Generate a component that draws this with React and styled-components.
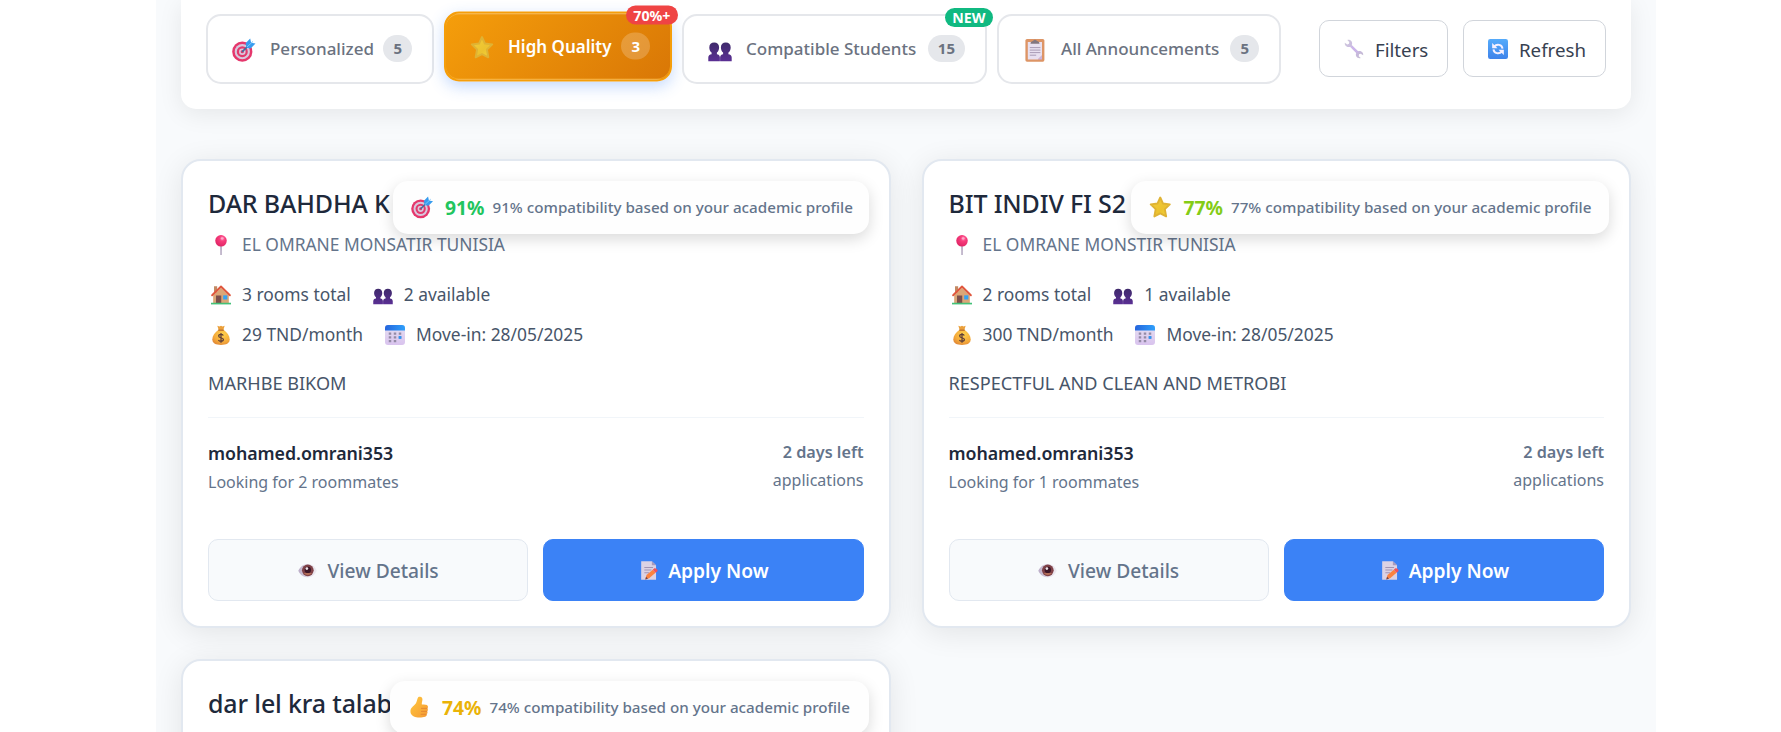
import React from 'react';
import styled, { createGlobalStyle, css } from 'styled-components';

const GlobalStyle = createGlobalStyle`
  *, *::before, *::after { box-sizing: border-box; }
  body {
    margin: 0;
    height: 732px;
    overflow: hidden;
    background: #fff;
    font-family: "Noto Sans", "Open Sans", sans-serif;
    color: #1e293b;
  }
  button { font-family: inherit; cursor: pointer; }
`;

/* ---------- icons ---------- */

const Svg = styled.svg`
  display: block;
  flex: none;
  width: ${(p) => p.$size}px;
  height: ${(p) => p.$size}px;
  overflow: visible;
`;

const DefsSvg = styled.svg`
  display: block;
  width: 0;
  height: 0;
`;

const Gradients = () => (
  <DefsSvg aria-hidden="true">
    <defs>
      <linearGradient id="starFill" x1="0" y1="0" x2="1" y2="1">
        <stop offset="0" stopColor="#f3cf3d" />
        <stop offset="0.6" stopColor="#ecc22f" />
        <stop offset="1" stopColor="#f5d93b" />
      </linearGradient>
      <linearGradient id="bustFill" x1="0" y1="0" x2="0" y2="1">
        <stop offset="0" stopColor="#3f2a6b" />
        <stop offset="1" stopColor="#5a2f94" />
      </linearGradient>
      <linearGradient id="blueFill" x1="0" y1="0" x2="0" y2="1">
        <stop offset="0" stopColor="#55abfb" />
        <stop offset="1" stopColor="#3f83ea" />
      </linearGradient>
      <linearGradient id="wrenchFill" x1="0" y1="0" x2="1" y2="1">
        <stop offset="0" stopColor="#cfcbd8" />
        <stop offset="0.5" stopColor="#c9b5e6" />
        <stop offset="1" stopColor="#c4bdcf" />
      </linearGradient>
      <radialGradient id="pinFill" cx="0.62" cy="0.3" r="0.75">
        <stop offset="0" stopColor="#ff7fae" />
        <stop offset="0.35" stopColor="#f73c7b" />
        <stop offset="1" stopColor="#dd2263" />
      </radialGradient>
      <radialGradient id="bagFill" cx="0.6" cy="0.3" r="0.85">
        <stop offset="0" stopColor="#ffd24d" />
        <stop offset="0.6" stopColor="#f4a93a" />
        <stop offset="1" stopColor="#d97b35" />
      </radialGradient>
      <linearGradient id="calendarTop" x1="0" y1="0" x2="1" y2="0">
        <stop offset="0" stopColor="#2664dc" />
        <stop offset="1" stopColor="#2ea0fb" />
      </linearGradient>
      <linearGradient id="calendarBody" x1="0" y1="0" x2="0" y2="1">
        <stop offset="0" stopColor="#e6e0f1" />
        <stop offset="1" stopColor="#d9c3ee" />
      </linearGradient>
      <linearGradient id="eyeWhite" x1="0" y1="0" x2="1" y2="0">
        <stop offset="0" stopColor="#b9aac6" />
        <stop offset="0.6" stopColor="#e5dfe9" />
        <stop offset="1" stopColor="#eeeaf0" />
      </linearGradient>
      <linearGradient id="thumbFill" x1="0" y1="0" x2="1" y2="1">
        <stop offset="0" stopColor="#ffc83d" />
        <stop offset="1" stopColor="#f59a35" />
      </linearGradient>
    </defs>
  </DefsSvg>
);

const icons = {
  target: (
    <>
      <circle cx="10.3" cy="13.7" r="10.1" fill="#e5376c" />
      <circle cx="10.3" cy="13.7" r="7.6" fill="#d8c8dd" />
      <circle cx="10.3" cy="13.7" r="5.5" fill="#e23a6d" />
      <circle cx="10.3" cy="13.7" r="3.3" fill="#d8c8dd" />
      <circle cx="10.3" cy="13.7" r="1.6" fill="#e23a6d" />
      <path d="M10.6 13.4 16 8" stroke="#3f6f9f" strokeWidth="1.6" strokeLinecap="round" />
      <path d="M13.6 5.3 18.2.5l.9 4.2 4.4.9-4.9 4.9-4-.8z" fill="#379cee" />
      <path d="M15 9 21 3.4" stroke="#7cc5fa" strokeWidth="1" />
    </>
  ),
  star: (
    <path
      d="M12 1.6 14.9 8l7.3.9-5.3 5.1 1.4 7.8L12 18.600l-6.300 3.200L7.100 14 1.800 8.900 9.100 8z"
      fill="url(#starFill)"
      stroke="#dfb334"
      strokeWidth="2"
      strokeLinejoin="round"
    />
  ),
  people: (
    <g fill="url(#bustFill)">
      <path d="M6.2 4.6c2.900 0 4.900 1.900 4.900 4.900 0 2.200-.9 4.100-2.200 5.100v1.700c1.800.3 3 1.400 3 3.200v3.700H.3v-3.700c0-1.800 1.300-2.900 3.300-3.200v-1.700c-1.400-1-2.300-2.900-2.300-5.100 0-3 2-4.900 4.900-4.900z" />
      <path d="M17.800 4.600c2.900 0 4.900 1.900 4.900 4.900 0 2.200-.9 4.100-2.300 5.100v1.700c2 .3 3.300 1.400 3.300 3.200v3.700H12.100v-3.700c0-1.800 1.200-2.900 3-3.200v-1.700c-1.300-1-2.200-2.900-2.200-5.100 0-3 2-4.900 4.900-4.900z" />
    </g>
  ),
  clipboard: (
    <>
      <rect x="2.4" y="1" width="19" height="22.700" rx="1.600" fill="#dd9566" />
      <path d="M4.800 4h14.200v13.500L14.800 21.500H4.800z" fill="#e8e0f0" />
      <path d="M19 17.300v4.200h-4.300z" fill="#c9b3df" />
      <path d="M7.500 5.800c0-2 1.400-2.700 2.600-2.800a2.100 2.100 0 0 1 3.800 0c1.200.1 2.600.8 2.600 2.800z" fill="#83777f" />
      <path d="M6.800 9.600h10.600M6.800 12.100h10.600M6.800 14.600h10.600M6.800 17.200h6.400" stroke="#a99cb5" strokeWidth="1" />
    </>
  ),
  wrench: (
    <>
      <path d="M6.500 6.500 18 18" stroke="url(#wrenchFill)" strokeWidth="3" />
      <path
        d="M1 4.600 4 6.500 6 5.800 6.300 3.500 4 1.200C7.400.1 10.600 3 9.600 6.700L7 9.500C3.700 10.400.4 8 1 4.600zM23 19.600l-3-1.900-2 .7-.3 2.300 2.400 2.200c-3.400 1.100-6.700-1.700-5.700-5.400l2.600-2.800c3.300-.9 6.600 1.500 6 4.900z"
        fill="url(#wrenchFill)"
      />
      <path d="M9 8.700 16.200 16" stroke="#cdb2f0" strokeWidth="1.400" />
    </>
  ),
  refresh: (
    <>
      <rect x="0" y="0" width="24" height="24" rx="2.600" fill="url(#blueFill)" />
      <g fill="none" stroke="#f5f0ff" strokeWidth="2.300">
        <path d="M7.300 9.200C10.500 5.400 17 6.500 17.400 11.600" />
        <path d="M16.700 15C13.500 18.700 7 17.500 6.600 12.500" />
      </g>
      <path d="M5 4.800v6.400h6.400zM19 19.200v-6.400h-6.400z" fill="#f5f0ff" />
    </>
  ),
  pin: (
    <>
      <path d="M11.100 12h1.900l-.1 12h-1.700z" fill="#b0a3bd" />
      <circle cx="12" cy="7" r="6.900" fill="url(#pinFill)" />
      <ellipse cx="13.400" cy="4.200" rx="1.800" ry="1.400" fill="#ffa9c9" />
    </>
  ),
  house: (
    <>
      <path d="M3.600 1.500h3.800v8H3.600z" fill="#c28a63" />
      <path d="M2.600 12.400 12 3.300l9.400 9.100v9.400H2.600z" fill="#dba677" />
      <path d="M6 12.600h6.300v9.200H6z" fill="#7c4f4b" />
      <path d="M14.600 12.400h5v5h-5z" fill="#35a2f2" />
      <path d="M1.300 12.300 12 1.800l10.700 10.500" fill="none" stroke="#e0563d" strokeWidth="2.200" strokeLinejoin="round" strokeLinecap="round" />
      <path d="M0 21.300h24v2H0z" fill="#43c178" />
    </>
  ),
  bag: (
    <>
      <path d="M7.600.9l2.500 1 1.900-1 1.900 1 2.500-1-1.600 5.200H9.200z" fill="#eba03b" />
      <path d="M9 5.800h6c4.600 3.200 7.400 7.400 7.400 11.400 0 5-4.200 6.800-10.400 6.800S1.600 22.200 1.600 17.200C1.600 13.200 4.400 9 9 5.800z" fill="url(#bagFill)" />
      <path d="M8.700 6.200h6.600" stroke="#b96a2c" strokeWidth="1.500" />
      <path d="M14.800 12.600c-.6-1-1.600-1.400-2.900-1.400-1.600 0-2.700.8-2.700 2 0 2.900 5.700 1.300 5.700 4.300 0 1.300-1.200 2.100-2.900 2.100-1.500 0-2.600-.6-3.100-1.700M12 9.700v11.500" fill="none" stroke="#5f3f38" strokeWidth="1.500" />
    </>
  ),
  calendar: (
    <>
      <rect x="0" y="0" width="24" height="24" rx="3.600" fill="url(#calendarBody)" />
      <path d="M0 6.600V3.600A3.600 3.600 0 0 1 3.600 0h16.800A3.600 3.600 0 0 1 24 3.600v3z" fill="url(#calendarTop)" />
      <path d="M4.500 10.300h15M4.500 14.800h15M4.500 19.300h10.500" stroke="#948aa6" strokeWidth="2.700" strokeDasharray="3 3" />
      <rect x="16.400" y="13.300" width="3.300" height="3.300" fill="#2c95f5" />
    </>
  ),
  eye: (
    <>
      <path d="M.4 12.300C3.300 6.300 8 3.800 12.400 3.800c4.600 0 9.200 2.700 11.300 8.500-2.600 5.800-6.800 8.200-11.300 8.200-4.500 0-9.400-2.200-12-8.200z" fill="url(#eyeWhite)" />
      <circle cx="12.400" cy="11.800" r="7.400" fill="#7f4147" />
      <path d="M7 15.300a7 7 0 0 0 10.800 0z" fill="#b26d57" />
      <circle cx="12.400" cy="11.300" r="4" fill="#3c1526" />
      <circle cx="11.200" cy="9.600" r="1.700" fill="#f1e8ec" />
    </>
  ),
  memo: (
    <>
      <path d="M4 .3h13.500l5.300 5v18.400H4z" fill="#dbd2e4" />
      <path d="M17.500.3l5.300 5h-5.300z" fill="#a99abb" />
      <path d="M8 8.200h11M8 11.500h9M8 14.800h6" stroke="#a294b4" strokeWidth="1.300" />
      <path d="M9.200 23.300l1.500-5.500 8-6.800 3.400 3.900-8 6.800z" fill="#fb8340" />
      <path d="M18.700 11l2-1.800c2-.6 4.700 1.800 3.900 3.600l-2.500 2.100z" fill="#f0525b" />
      <path d="M9.200 23.300l1-3.500 2.400 2.600z" fill="#70434a" />
    </>
  ),
  thumb: (
    <>
      <path d="M11.800.8c2.600-.6 3.800 1 3.600 3.200-.2 1.900-.9 3.400-.6 5.100 3.300 0 6.300.2 6.500 2.300.1 1-.4 1.500-.9 1.800 1.100.5 1.200 2.600-.2 3.100 1 .8.900 2.500-.4 3 .6 1.500-.2 2.500-1.500 2.800-2.300.7-6.100 1.400-9.500.5-3.500-.9-6.100-2.600-6.200-6.200-.1-4.100 3.200-5.400 5.700-8.500C10 5.600 9.700 1.300 11.800.8z" fill="url(#thumbFill)" />
      <path d="M14.300 13.200h6M14.300 16.400h5.800M14 19.500h5.400" stroke="#e38632" strokeWidth="1" strokeLinecap="round" />
    </>
  ),
};

const Icon = ({ name, size }) => (
  <Svg viewBox="0 0 24 24" $size={size} fill="none" aria-hidden="true">
    {icons[name]}
  </Svg>
);

/* ---------- page frame ---------- */

const Page = styled.main`
  width: 1500px;
  height: 732px;
  margin-left: 156px;
  padding: 0 25px;
  background: #f8fafc;
  overflow: hidden;
`;

const Toolbar = styled.header`
  display: flex;
  justify-content: space-between;
  align-items: center;
  height: 109px;
  padding: 14px 25px 25px;
  background: #fff;
  border-radius: 0 0 15px 15px;
  box-shadow: 0 5px 25px rgba(0, 0, 0, 0.08);
`;

const TabList = styled.nav`
  display: flex;
  gap: 10px;
`;

const Tab = styled.button`
  position: relative;
  display: flex;
  align-items: center;
  width: ${(p) => p.$width}px;
  height: 70px;
  padding: 0 20px 1px 24px;
  border: 2px solid #e5e7eb;
  border-radius: 15px;
  background: #fff;
  color: #6b7280;
  font-size: 17px;
  font-weight: 500;
  white-space: nowrap;

  ${(p) =>
    p.$active &&
    css`
      border-color: #f59e0b;
      background: linear-gradient(135deg, #f59e0b, #d97706);
      color: #fff;
      font-weight: 600;
      transform: translateY(-2.5px);
      box-shadow: 0 5px 15px rgba(59, 130, 246, 0.3),
        inset 0 1px 0 rgba(255, 255, 255, 0.22),
        inset 0 -1px 0 rgba(255, 190, 60, 0.5);
    `}
`;

const TabIcon = styled.span`
  margin: 3px 14px 0 0;
`;

const Count = styled.span`
  margin-left: auto;
  padding: 0 10px;
  height: 27px;
  line-height: 27px;
  border-radius: 15px;
  background: ${(p) => (p.$active ? 'rgba(255, 255, 255, 0.2)' : '#e5e7eb')};
  font-size: 15px;
  font-weight: 700;
`;

const Flag = styled.span`
  position: absolute;
  top: -8px;
  right: -8px;
  height: 19px;
  padding: 0 7.5px;
  border-radius: 10px;
  background: ${(p) => p.$color};
  color: #fff;
  font-size: 14.2px;
  font-weight: 700;
  line-height: 20px;
`;

const Actions = styled.div`
  display: flex;
  gap: 15px;
`;

const ActionButton = styled.button`
  display: flex;
  align-items: center;
  gap: 11px;
  width: ${(p) => p.$width}px;
  height: 57px;
  margin-bottom: 1px;
  padding: 1px 20px 0 24px;
  border: 1px solid #d1d5db;
  border-radius: 10px;
  background: #fff;
  color: #374151;
  font-size: 18.7px;
`;

/* ---------- cards ---------- */

const CardGrid = styled.section`
  display: grid;
  grid-template-columns: 1fr 1fr;
  gap: 31px;
  padding-top: 50px;
`;

const Card = styled.article`
  position: relative;
  height: 469px;
  padding: 25px;
  border: 2px solid #e2e8f0;
  border-radius: 20px;
  background: #fff;
  box-shadow: 0 5px 30px rgba(0, 0, 0, 0.09);
`;

const Title = styled.h3`
  margin: 0;
  font-size: 25px;
  font-weight: 500;
  letter-spacing: -0.15px;
  line-height: 35px;
  white-space: nowrap;
  color: #1e293b;
`;

const Match = styled.div`
  position: absolute;
  top: 20px;
  right: 20px;
  display: flex;
  align-items: center;
  width: ${(p) => p.$width}px;
  height: 53px;
  padding-left: 18px;
  border-radius: 15px;
  background: #fefefe;
  box-shadow: 0 5px 15px rgba(0, 0, 0, 0.15);
  white-space: nowrap;
`;

const Score = styled.strong`
  width: 47.5px;
  margin-left: 12px;
  font-size: 19.3px;
  font-weight: 700;
  color: ${(p) => p.$color};
`;

const MatchText = styled.span`
  padding-bottom: 2px;
  font-size: 15.2px;
  font-weight: 500;
  color: #64748b;
`;

const IconText = styled.span`
  display: flex;
  align-items: center;
  gap: 11px;
  height: 30px;
  padding-left: 3px;
  font-size: 17.4px;
  white-space: nowrap;

  svg {
    margin-top: 1px;
  }
`;

const Location = styled.div`
  margin-top: 8px;
  color: #64748b;
`;

const Facts = styled.div`
  display: grid;
  gap: 10px;
  margin-top: 20px;
  color: #475569;
`;

const FactRow = styled.div`
  display: flex;
  gap: 19px;
`;

const Description = styled.p`
  margin: 19px 0;
  font-size: 18.1px;
  line-height: 30px;
  color: #475569;
`;

const Meta = styled.div`
  display: flex;
  justify-content: space-between;
  height: 79px;
  padding-top: 20px;
  border-top: 1px solid #f1f5f9;
  color: #64748b;
  font-size: 16px;
  line-height: 28px;
`;

const Owner = styled.div`
  color: #1e293b;
  font-size: 17.8px;
  font-weight: 600;
  letter-spacing: -0.05px;
  line-height: 30px;
`;

const Deadline = styled.div`
  text-align: right;
`;

const DaysLeft = styled.div`
  font-size: 16.2px;
  font-weight: 600;
`;

const CardActions = styled.div`
  display: grid;
  grid-template-columns: 1fr 1fr;
  gap: 15px;
  margin-top: 43px;
`;

const CardButton = styled.button`
  display: flex;
  justify-content: center;
  align-items: center;
  gap: 11px;
  height: 62px;
  padding: 1px 0 0;
  border: 1px solid ${(p) => (p.$primary ? '#3b82f6' : '#e2e8f0')};
  border-radius: 10px;
  background: ${(p) => (p.$primary ? '#3b82f6' : '#f8fafc')};
  color: ${(p) => (p.$primary ? '#fff' : '#64748b')};
  font-size: 19.2px;
  font-weight: ${(p) => (p.$primary ? 600 : 500)};
`;

/* ---------- data ---------- */

const tabs = [
  { label: 'Personalized', icon: 'target', count: 5, width: 228 },
  { label: 'High Quality', icon: 'star', count: 3, width: 228, active: true, flag: '70%+', flagColor: '#ef4444' },
  { label: 'Compatible Students', icon: 'people', count: 15, width: 305, flag: 'NEW', flagColor: '#10b981' },
  { label: 'All Announcements', icon: 'clipboard', count: 5, width: 284 },
];

const listings = [
  {
    title: 'DAR BAHDHA K', icon: 'target', score: '91%', color: '#22c55e', width: 476,
    location: 'EL OMRANE MONSATIR TUNISIA', rooms: 3, available: 2, price: 29,
    description: 'MARHBE BIKOM', wanted: 2,
  },
  {
    title: 'BIT INDIV FI S2', icon: 'star', score: '77%', color: '#84cc16', width: 478,
    location: 'EL OMRANE MONSTIR TUNISIA', rooms: 2, available: 1, price: 300,
    description: 'RESPECTFUL AND CLEAN AND METROBI', wanted: 1,
  },
  { title: 'dar lel kra talab', icon: 'thumb', score: '74%', color: '#eab308', width: 479 },
];

const Listing = ({ item }) => (
  <Card>
    <Title>{item.title}</Title>
    {item.location && (
      <>
        <Location>
          <IconText><Icon name="pin" size={20} />{item.location}</IconText>
        </Location>
        <Facts>
          <FactRow>
            <IconText><Icon name="house" size={20} />{item.rooms} rooms total</IconText>
            <IconText><Icon name="people" size={20} />{item.available} available</IconText>
          </FactRow>
          <FactRow>
            <IconText><Icon name="bag" size={20} />{item.price} TND/month</IconText>
            <IconText><Icon name="calendar" size={20} />Move-in: 28/05/2025</IconText>
          </FactRow>
        </Facts>
        <Description>{item.description}</Description>
        <Meta>
          <div>
            <Owner>mohamed.omrani353</Owner>
            <div>Looking for {item.wanted} roommates</div>
          </div>
          <Deadline>
            <DaysLeft>2 days left</DaysLeft>
            <div>applications</div>
          </Deadline>
        </Meta>
        <CardActions>
          <CardButton><Icon name="eye" size={19} />View Details</CardButton>
          <CardButton $primary><Icon name="memo" size={19} />Apply Now</CardButton>
        </CardActions>
      </>
    )}
    <Match $width={item.width}>
      <Icon name={item.icon} size={22.5} />
      <Score $color={item.color}>{item.score}</Score>
      <MatchText>{item.score} compatibility based on your academic profile</MatchText>
    </Match>
  </Card>
);

export default function App() {
  return (
    <>
      <GlobalStyle />
      <Gradients />
      <Page>
        <Toolbar>
          <TabList>
            {tabs.map((tab) => (
              <Tab key={tab.label} $width={tab.width} $active={tab.active}>
                <TabIcon><Icon name={tab.icon} size={24} /></TabIcon>
                {tab.label}
                <Count $active={tab.active}>{tab.count}</Count>
                {tab.flag && <Flag $color={tab.flagColor}>{tab.flag}</Flag>}
              </Tab>
            ))}
          </TabList>
          <Actions>
            <ActionButton $width={129}><Icon name="wrench" size={20} />Filters</ActionButton>
            <ActionButton $width={143}><Icon name="refresh" size={20} />Refresh</ActionButton>
          </Actions>
        </Toolbar>
        <CardGrid>
          {listings.map((item) => <Listing key={item.title} item={item} />)}
        </CardGrid>
      </Page>
    </>
  );
}
